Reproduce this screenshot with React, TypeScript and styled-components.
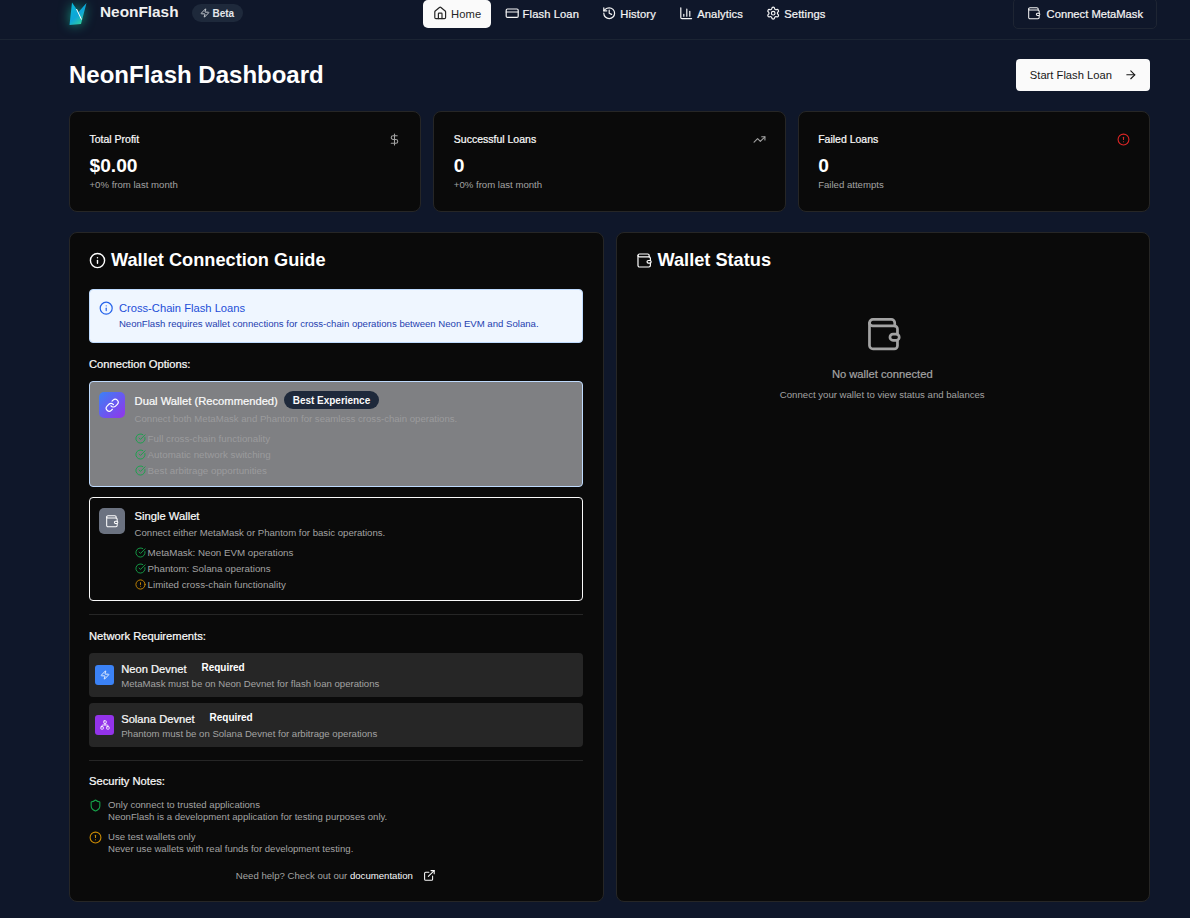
import React from "react";
import styled, { createGlobalStyle, css } from "styled-components";
import {
  Home, CreditCard, History, ChartColumn, Settings, Zap, DollarSign, TrendingUp, CircleAlert, Info,
  Link as LinkIcon, CircleCheckBig, ExternalLink, Shield, ArrowRight, Network,
} from "lucide-react";

const Global = createGlobalStyle`
  html, body { margin: 0; padding: 0; background: #0f172a; overflow: hidden; }
  body { font-family: "Liberation Sans", Arial, sans-serif; color: #fafafa; }
  * { box-sizing: border-box; }
`;

const medium = css`
  font-weight: 500;
  -webkit-text-stroke: 0.22px currentColor;
`;

const WalletIcon = ({ size = 16, strokeWidth = 1.7 }: { size?: number; strokeWidth?: number }) => (
  <svg width={size} height={size} viewBox="0 0 24 24" fill="none" stroke="currentColor" strokeWidth={strokeWidth} strokeLinecap="round" strokeLinejoin="round">
    <path d="M18.6 6.8V5a2.2 2.2 0 0 0-2.2-2.2H5A2.2 2.2 0 0 0 2.8 5v14A2.2 2.2 0 0 0 5 21.2h13.3a2 2 0 0 0 2-2v-3.4" />
    <path d="M2.8 5A2 2 0 0 0 5 6.8h13.3a2 2 0 0 1 2 2V12" />
    <rect x="15.6" y="12" width="5.8" height="3.8" rx="1.9" />
  </svg>
);

const Page = styled.div`
  width: 1190px;
  height: 918px;
  overflow: hidden;
`;
const Header = styled.header`
  height: 52px;
  margin-top: -12px;
  border-bottom: 1px solid #1b2433;
  padding: 0 33px 0 69px;
  display: grid;
  grid-template-columns: 354px 1fr auto;
  align-items: center;
`;
const Brand = styled.div`
  display: flex;
  align-items: center;
`;
const LogoWrap = styled.span`
  display: flex;
  width: 18px;
  height: 24px;
  margin-right: 13px;
  filter: drop-shadow(0 0 6px rgba(20, 220, 170, 0.65));
`;
const BrandName = styled.span`
  font-size: 15.36px;
  line-height: 20px;
  font-weight: 700;
  color: #f0f0f0;
  margin: 0 13px 3px 0;
`;
const BetaPill = styled.span`
  display: flex;
  align-items: center;
  gap: 3px;
  height: 18px;
  padding: 0 9px 0 8px;
  margin-bottom: 1px;
  border-radius: 9px;
  background: #1e293b;
  font-size: 10px;
  letter-spacing: -0.03px;
  font-weight: 700;
  color: #e5e7eb;
`;
const Nav = styled.nav`
  display: flex;
  align-items: center;
  gap: 3.4px;
`;
const NavItem = styled.span<{ $active?: boolean }>`
  display: flex;
  align-items: center;
  gap: 3.6px;
  height: 28px;
  padding: 0 10px;
  border-radius: 5px;
  font-size: 11.2px;
  letter-spacing: 0.1px;
  font-weight: 500;
  ${(p) => !p.$active && medium}
  background: ${(p) => (p.$active ? "#fafafa" : "transparent")};
  color: ${(p) => (p.$active ? "#262626" : "#f5f5f5")};
`;
const ConnectButton = styled.span`
  display: flex;
  align-items: center;
  gap: 5px;
  height: 31px;
  padding: 0 13px;
  border: 1px solid #1e2533;
  border-radius: 5px;
  font-size: 11.2px;
  ${medium}
  color: #f5f5f5;
`;
const Main = styled.main`
  padding: 19px 40px 0 69px;
`;
const TitleRow = styled.div`
  display: flex;
  justify-content: space-between;
  align-items: center;
  height: 32px;
  margin-bottom: 20px;
`;
const Title = styled.h1`
  margin: 0;
  font-size: 24px;
  line-height: 32px;
  font-weight: 700;
  color: #fff;
`;
const StartButton = styled.span`
  display: flex;
  align-items: center;
  gap: 12.5px;
  height: 32px;
  padding: 0 12px 0 13.5px;
  background: #fafafa;
  color: #171717;
  border-radius: 4px;
  font-size: 11.2px;
  font-weight: 500;
`;
const Stats = styled.section`
  display: grid;
  grid-template-columns: repeat(3, 1fr);
  gap: 12px;
  margin-bottom: 20px;
`;
const StatCard = styled.article`
  height: 101px;
  background: #0a0a0a;
  border: 1px solid #262626;
  border-radius: 8px;
  padding: 19px 19px 0 19.5px;
`;
const StatHead = styled.div`
  display: flex;
  justify-content: space-between;
  align-items: center;
  height: 16px;
  margin-bottom: 8px;
`;
const StatLabel = styled.span`
  font-size: 10.5px;
  ${medium}
  color: #fafafa;
`;
const IconTone = styled.span<{ $c: string }>`
  display: inline-flex;
  flex: none;
  color: ${(p) => p.$c};
`;
const StatValue = styled.div`
  font-size: 19.2px;
  line-height: 22px;
  font-weight: 700;
  color: #fff;
`;
const StatNote = styled.div`
  margin-top: 1px;
  font-size: 9.6px;
  line-height: 14px;
  color: #a3a3a3;
`;
const Columns = styled.section`
  display: grid;
  grid-template-columns: 1fr 1fr;
  gap: 12px;
`;
const Panel = styled.article`
  height: 670px;
  background: #0a0a0a;
  border: 1px solid #262626;
  border-radius: 8px;
  padding: 18px 20px 18px 19px;
`;
const PanelHead = styled.h2`
  display: flex;
  align-items: center;
  gap: 5px;
  margin: 0 0 20px;
  height: 18px;
  font-size: 18.2px;
  font-weight: 700;
  color: #fff;
`;
const InfoBox = styled.div`
  display: flex;
  gap: 5.5px;
  height: 54px;
  padding: 11px 9px;
  background: #eff6ff;
  border: 1px solid #bfdbfe;
  border-radius: 4px;
  margin-bottom: 13.5px;
`;
const InfoTitle = styled.div`
  font-size: 11.2px;
  line-height: 14px;
  font-weight: 500;
  color: #1d4ed8;
  margin-bottom: 2px;
`;
const InfoText = styled.div`
  font-size: 9.6px;
  line-height: 14px;
  color: #1e40af;
`;
const SectionLabel = styled.div<{ $gap?: number }>`
  font-size: 11.2px;
  line-height: 14px;
  ${medium}
  color: #fafafa;
  margin-bottom: ${(p) => p.$gap ?? 10.5}px;
`;
const OptionCard = styled.div<{ $dim?: boolean }>`
  display: flex;
  gap: 10px;
  padding: 10px 9px 8px;
  margin-bottom: 10px;
  border-radius: 4px;
  border: 1px solid ${(p) => (p.$dim ? "#bfdbfe" : "#fafafa")};
  background: ${(p) => (p.$dim ? "#7f8083" : "#0a0a0a")};
`;
const OptionIcon = styled.span<{ $bg: string }>`
  width: 25.6px;
  height: 25.6px;
  flex: none;
  display: flex;
  align-items: center;
  justify-content: center;
  border-radius: 5px;
  color: #fff;
  background: ${(p) => p.$bg};
`;
const OptionBody = styled.div`
  flex: 1;
`;
const OptionTitle = styled.div`
  display: flex;
  align-items: center;
  gap: 6px;
  min-height: 16px;
  font-size: 11.2px;
  ${medium}
  color: #fafafa;
`;
const BestBadge = styled.span`
  display: flex;
  align-items: center;
  height: 18px;
  margin: -1px 0 1px;
  padding: 0 9px;
  background: #1e293b;
  border-radius: 9px;
  font-size: 10px;
  letter-spacing: -0.03px;
  font-weight: 700;
  -webkit-text-stroke: 0;
  color: #fafafa;
`;
const OptionText = styled.div<{ $dim?: boolean }>`
  font-size: 9.6px;
  line-height: 18px;
  margin-bottom: 2px;
  color: ${(p) => (p.$dim ? "#9b9b9d" : "#a3a3a3")};
`;
const Feature = styled.div<{ $dim?: boolean }>`
  display: flex;
  align-items: center;
  gap: 2px;
  height: 16px;
  font-size: 9.75px;
  color: ${(p) => (p.$dim ? "#9b9b9d" : "#a3a3a3")};
`;
const Divider = styled.hr<{ $after?: number }>`
  margin: 13px 0 ${(p) => p.$after ?? 13.5}px;
  border: 0;
  border-top: 1px solid #262626;
`;
const NetRow = styled.div`
  display: flex;
  align-items: center;
  gap: 7px;
  height: 44px;
  padding: 0 6px;
  margin-bottom: 6px;
  background: #262626;
  border-radius: 4px;
`;
const NetIcon = styled.span<{ $bg: string }>`
  width: 19.2px;
  height: 19.2px;
  flex: none;
  display: flex;
  align-items: center;
  justify-content: center;
  border-radius: 3px;
  color: #fff;
  background: ${(p) => p.$bg};
`;
const NetCopy = styled.div`
  margin-top: 2px;
`;
const NetName = styled.div`
  display: flex;
  gap: 15px;
  font-size: 11.2px;
  line-height: 15px;
  ${medium}
  color: #fafafa;
`;
const Required = styled.span`
  font-size: 10px;
  letter-spacing: -0.03px;
  line-height: 12px;
  font-weight: 700;
  -webkit-text-stroke: 0;
  color: #fff;
`;
const NetText = styled.div`
  font-size: 9.6px;
  line-height: 14px;
  color: #a3a3a3;
`;
const Note = styled.div`
  display: flex;
  gap: 6px;
  margin-bottom: 8px;
  font-size: 9.6px;
  line-height: 12px;
  color: #a3a3a3;
`;
const Help = styled.div`
  display: flex;
  justify-content: center;
  align-items: center;
  gap: 10px;
  margin-top: 14px;
  font-size: 9.6px;
  color: #a3a3a3;
`;
const DocLink = styled.span`
  color: #fafafa;
`;
const Empty = styled.div`
  display: flex;
  flex-direction: column;
  align-items: center;
  margin-top: 46px;
  color: #a3a3a3;
`;
const EmptyIcon = styled.span`
  display: flex;
  margin-left: 3px;
`;
const EmptyTitle = styled.div`
  margin-top: 14px;
  font-size: 11.2px;
  line-height: 14px;
  ${medium}
`;
const EmptyText = styled.div`
  margin-top: 7px;
  font-size: 9.6px;
  line-height: 14px;
`;

const Logo = () => (
  <svg width="18" height="24" viewBox="0 0 18 24">
    <defs>
      <linearGradient id="lg" x1="0.1" y1="0.1" x2="0.7" y2="1">
        <stop offset="0" stopColor="#06b6d4" />
        <stop offset="0.55" stopColor="#0ea5d8" />
        <stop offset="1" stopColor="#34d399" />
      </linearGradient>
    </defs>
    <path d="M3 .5L9.5 10L17.5 1L12 22L.5 23z" fill="url(#lg)" />
    <path d="M7.5 7l5 10.5" stroke="#fff" strokeWidth="1" />
  </svg>
);

const navItems = [
  { icon: <Home size={14.4} />, label: "Home", active: true },
  { icon: <CreditCard size={14.4} />, label: "Flash Loan" },
  { icon: <History size={14.4} />, label: "History" },
  { icon: <ChartColumn size={14.4} />, label: "Analytics" },
  { icon: <Settings size={14.4} />, label: "Settings" },
];

const Check = () => (
  <IconTone $c="#16a34a"><CircleCheckBig size={11} /></IconTone>
);

export default function App() {
  return (
    <Page>
      <Global />
      <Header>
        <Brand>
          <LogoWrap><Logo /></LogoWrap>
          <BrandName>NeonFlash</BrandName>
          <BetaPill><Zap size={10} />Beta</BetaPill>
        </Brand>
        <Nav>
          {navItems.map((n) => (
            <NavItem key={n.label} $active={n.active}>{n.icon}{n.label}</NavItem>
          ))}
        </Nav>
        <ConnectButton><WalletIcon size={14.4} />Connect MetaMask</ConnectButton>
      </Header>
      <Main>
        <TitleRow>
          <Title>NeonFlash Dashboard</Title>
          <StartButton>Start Flash Loan<ArrowRight size={13.6} /></StartButton>
        </TitleRow>
        <Stats>
          <StatCard>
            <StatHead><StatLabel>Total Profit</StatLabel><IconTone $c="#a3a3a3"><DollarSign size={13} /></IconTone></StatHead>
            <StatValue>$0.00</StatValue>
            <StatNote>+0% from last month</StatNote>
          </StatCard>
          <StatCard>
            <StatHead><StatLabel>Successful Loans</StatLabel><IconTone $c="#a3a3a3"><TrendingUp size={13} /></IconTone></StatHead>
            <StatValue>0</StatValue>
            <StatNote>+0% from last month</StatNote>
          </StatCard>
          <StatCard>
            <StatHead><StatLabel>Failed Loans</StatLabel><IconTone $c="#dc2626"><CircleAlert size={13} /></IconTone></StatHead>
            <StatValue>0</StatValue>
            <StatNote>Failed attempts</StatNote>
          </StatCard>
        </Stats>
        <Columns>
          <Panel>
            <PanelHead><Info size={17} />Wallet Connection Guide</PanelHead>
            <InfoBox>
              <IconTone $c="#2563eb"><Info size={14.4} /></IconTone>
              <div>
                <InfoTitle>Cross-Chain Flash Loans</InfoTitle>
                <InfoText>NeonFlash requires wallet connections for cross-chain operations between Neon EVM and Solana.</InfoText>
              </div>
            </InfoBox>
            <SectionLabel>Connection Options:</SectionLabel>
            <OptionCard $dim>
              <OptionIcon $bg="linear-gradient(135deg, #3b82f6, #9333ea)"><LinkIcon size={14.4} /></OptionIcon>
              <OptionBody>
                <OptionTitle>Dual Wallet (Recommended)<BestBadge>Best Experience</BestBadge></OptionTitle>
                <OptionText $dim>Connect both MetaMask and Phantom for seamless cross-chain operations.</OptionText>
                <Feature $dim><Check />Full cross-chain functionality</Feature>
                <Feature $dim><Check />Automatic network switching</Feature>
                <Feature $dim><Check />Best arbitrage opportunities</Feature>
              </OptionBody>
            </OptionCard>
            <OptionCard>
              <OptionIcon $bg="#6b7280"><WalletIcon size={14.4} /></OptionIcon>
              <OptionBody>
                <OptionTitle>Single Wallet</OptionTitle>
                <OptionText>Connect either MetaMask or Phantom for basic operations.</OptionText>
                <Feature><Check />MetaMask: Neon EVM operations</Feature>
                <Feature><Check />Phantom: Solana operations</Feature>
                <Feature><IconTone $c="#ca8a04"><CircleAlert size={11} /></IconTone>Limited cross-chain functionality</Feature>
              </OptionBody>
            </OptionCard>
            <Divider />
            <SectionLabel>Network Requirements:</SectionLabel>
            <NetRow>
              <NetIcon $bg="#3b82f6"><Zap size={10} /></NetIcon>
              <NetCopy>
                <NetName>Neon Devnet<Required>Required</Required></NetName>
                <NetText>MetaMask must be on Neon Devnet for flash loan operations</NetText>
              </NetCopy>
            </NetRow>
            <NetRow>
              <NetIcon $bg="#9333ea"><Network size={10} /></NetIcon>
              <NetCopy>
                <NetName>Solana Devnet<Required>Required</Required></NetName>
                <NetText>Phantom must be on Solana Devnet for arbitrage operations</NetText>
              </NetCopy>
            </NetRow>
            <Divider $after={13} />
            <SectionLabel $gap={11}>Security Notes:</SectionLabel>
            <Note>
              <IconTone $c="#16a34a"><Shield size={13} /></IconTone>
              <div>Only connect to trusted applications<br />NeonFlash is a development application for testing purposes only.</div>
            </Note>
            <Note>
              <IconTone $c="#ca8a04"><CircleAlert size={13} /></IconTone>
              <div>Use test wallets only<br />Never use wallets with real funds for development testing.</div>
            </Note>
            <Help>
              <span>Need help? Check out our <DocLink>documentation</DocLink></span>
              <ExternalLink size={12.8} color="#fafafa" />
            </Help>
          </Panel>
          <Panel>
            <PanelHead><WalletIcon size={17} />Wallet Status</PanelHead>
            <Empty>
              <EmptyIcon><WalletIcon size={38.4} /></EmptyIcon>
              <EmptyTitle>No wallet connected</EmptyTitle>
              <EmptyText>Connect your wallet to view status and balances</EmptyText>
            </Empty>
          </Panel>
        </Columns>
      </Main>
    </Page>
  );
}
